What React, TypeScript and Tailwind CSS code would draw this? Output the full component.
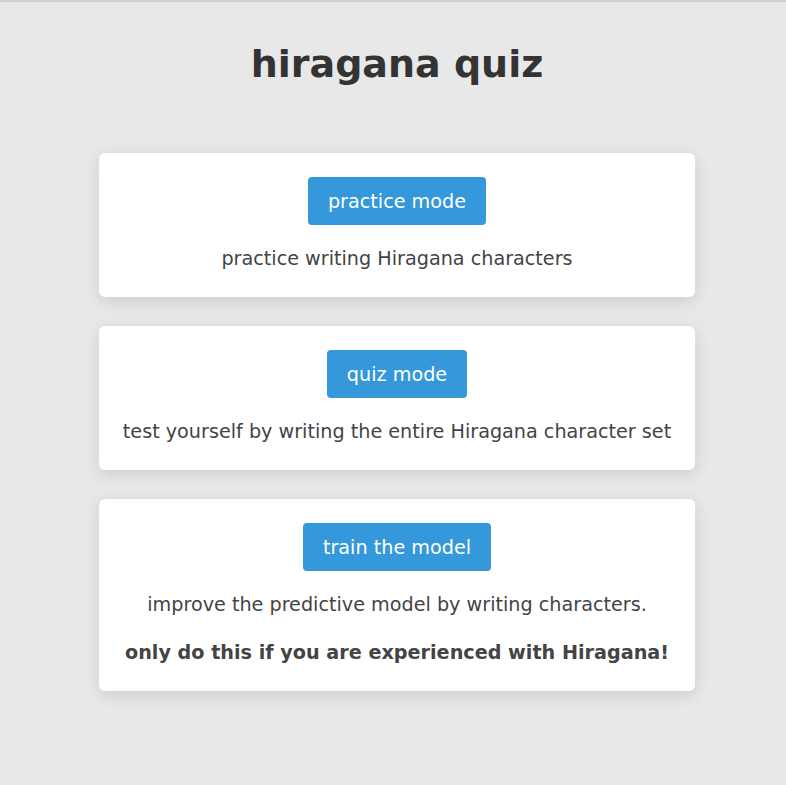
export default function App() {
  const font = { fontFamily: '"DejaVu Sans", sans-serif' };
  return (
    <div
      className="min-h-[785px] w-full bg-[#e8e8e8] border-t-2 border-[#d2d2d2] pl-2 pb-10"
      style={font}
    >
      <h1 className="pt-[38px] text-center text-[38px] leading-[48px] font-bold text-[#333333]">
        hiragana quiz
      </h1>

      <div className="mt-[65px] flex flex-col items-center gap-[29px]">
        <div className="w-[596px] rounded-md bg-white pt-6 pb-[25px] text-center shadow-[0_4px_16px_rgba(0,0,0,0.12)]">
          <button className="h-12 rounded bg-[#3498db] px-5 pt-0.5 text-[19.2px] text-white">
            practice mode
          </button>
          <p className="mt-5 text-[19.2px] leading-[27px] text-[#444444]">
            practice writing Hiragana characters
          </p>
        </div>

        <div className="w-[596px] rounded-md bg-white pt-6 pb-[25px] text-center shadow-[0_4px_16px_rgba(0,0,0,0.12)]">
          <button className="h-12 rounded bg-[#3498db] px-5 pt-0.5 text-[19.2px] text-white">
            quiz mode
          </button>
          <p className="mt-5 text-[19.2px] leading-[27px] text-[#444444]">
            test yourself by writing the entire Hiragana character set
          </p>
        </div>

        <div className="w-[596px] rounded-md bg-white pt-6 pb-[25px] text-center shadow-[0_4px_16px_rgba(0,0,0,0.12)]">
          <button className="h-12 rounded bg-[#3498db] px-5 pt-0.5 text-[19.2px] text-white">
            train the model
          </button>
          <p className="mt-5 text-[19.2px] leading-[27px] text-[#444444]">
            improve the predictive model by writing characters.
          </p>
          <p className="mt-[21px] text-[19.2px] leading-[27px] font-bold text-[#444444]">
            only do this if you are experienced with Hiragana!
          </p>
        </div>
      </div>
    </div>
  );
}
